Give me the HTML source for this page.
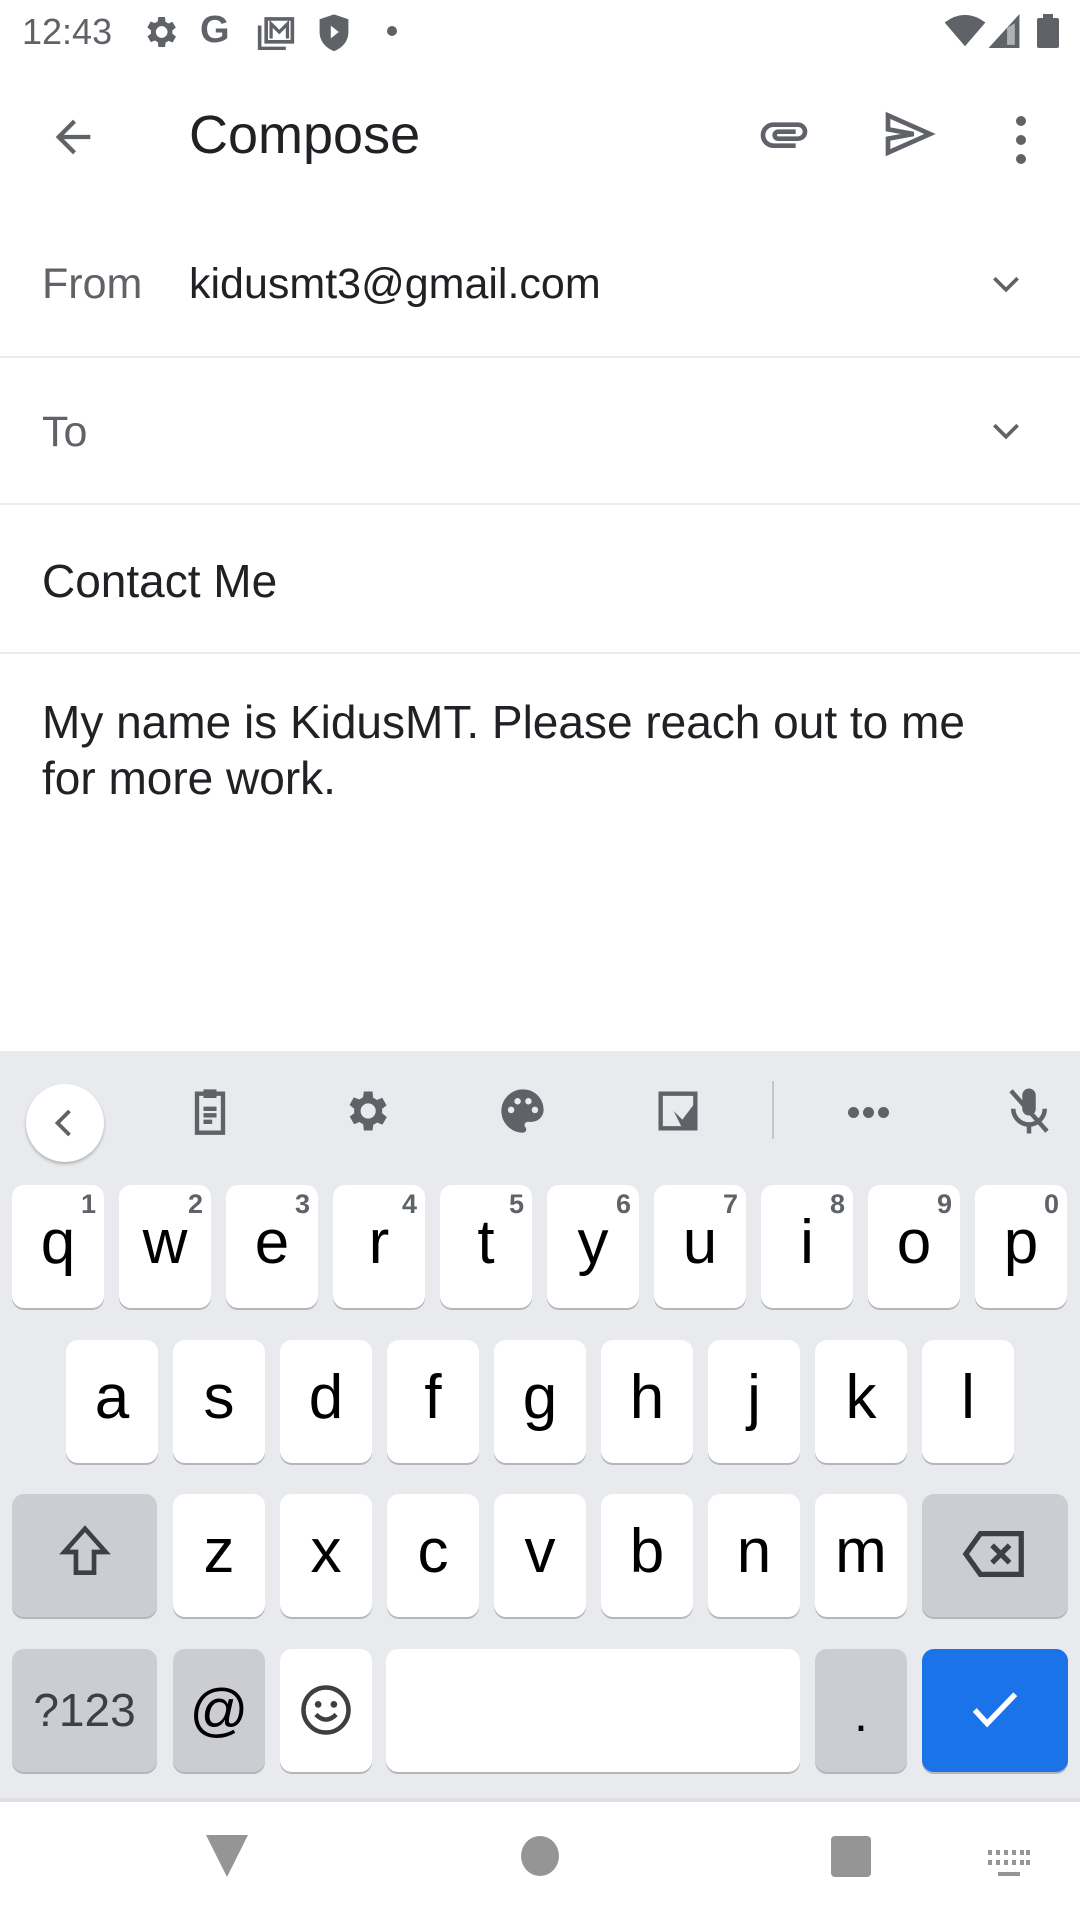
<!DOCTYPE html>
<html><head><meta charset="utf-8"><style>
*{margin:0;padding:0;box-sizing:border-box}
body{width:1080px;height:1920px;position:relative;background:#fff;font-family:"Liberation Sans",Roboto,sans-serif;overflow:hidden;color:#202124}
.a{position:absolute}
.t{font-size:43px}
.lab{color:#5f6368}
.hr{position:absolute;left:0;width:1080px;height:2px;background:#ebebeb}
.kb{position:absolute;left:0;top:1051px;width:1080px;height:747px;background:#e8eaed}
.k{position:absolute;width:92px;height:123px;background:#fff;border-radius:12px;box-shadow:0 2px 0 #b4b6ba;font-size:62px;text-align:center;line-height:116px;color:#000}
.g{background:#cbcdd3}
.n{position:absolute;right:8px;top:4px;font-size:27px;line-height:30px;color:#5f6368;font-weight:bold}
.ic{position:absolute}
</style></head><body>
<!-- status bar -->
<div class="a" style="left:22px;top:11px;font-size:36px;color:#5f6368">12:43</div>
<svg class="ic" style="left:140px;top:12px" width="40" height="40" viewBox="0 0 24 24"><path fill="#5f6368" d="M19.4 13a7.5 7.5 0 000-2l2.1-1.6-2-3.5-2.5 1a7 7 0 00-1.7-1L15 3h-4l-.4 2.7a7 7 0 00-1.7 1l-2.5-1-2 3.5L6.6 11a7.5 7.5 0 000 2l-2.1 1.6 2 3.5 2.5-1a7 7 0 001.7 1L11 21h4l.4-2.7a7 7 0 001.7-1l2.5 1 2-3.5zM13 15.5a3.5 3.5 0 110-7 3.5 3.5 0 010 7z"/></svg>
<div class="a" style="left:200px;top:9px;font-size:38px;font-weight:bold;color:#5f6368">G</div>
<svg class="ic" style="left:256px;top:14px" width="40" height="36" viewBox="0 0 24 22"><path fill="none" stroke="#5f6368" stroke-width="2.2" d="M6 3h16v14H6z M2 7v14h16"/><path fill="none" stroke="#5f6368" stroke-width="2" d="M9 15V6l5 5 5-5v9"/></svg>
<svg class="ic" style="left:318px;top:12px" width="32" height="40" viewBox="0 0 20 24"><path fill="#5f6368" d="M10 1l9 3v8c0 6-4 10-9 12C5 22 1 18 1 12V4z"/><path fill="#fff" d="M8 8l5 4-5 4z"/></svg>
<div class="a" style="left:387px;top:26px;width:10px;height:10px;border-radius:50%;background:#5f6368"></div>
<svg class="ic" style="left:944px;top:14px" width="42" height="34" viewBox="0 0 24 20"><path fill="#5f6368" d="M12 19L0 5q12-9 24 0z"/></svg>
<svg class="ic" style="left:988px;top:14px" width="32" height="34" viewBox="0 0 20 22"><path fill="#5f6368" d="M20 0v22H0z"/><path fill="#fff" d="M12 9v11h5V6z" opacity=".5"/></svg>
<div class="a" style="left:1037px;top:18px;width:22px;height:30px;background:#5f6368;border-radius:2px"></div>
<div class="a" style="left:1043px;top:14px;width:10px;height:6px;background:#5f6368"></div>
<!-- toolbar -->
<svg class="ic" style="left:47px;top:111px" width="52" height="52" viewBox="0 0 24 24"><path fill="#5f6368" d="M20 11H7.8l5.6-5.6L12 4l-8 8 8 8 1.4-1.4L7.8 13H20z"/></svg>
<div class="a" style="left:189px;top:104px;font-size:54px;color:#202124">Compose</div>
<svg class="ic" style="left:754px;top:106px" width="60" height="56" viewBox="0 0 24 24"><path fill="#5f6368" d="M2 12.5C2 9.46 4.46 7 7.5 7H18c2.21 0 4 1.79 4 4s-1.79 4-4 4H9.5C8.12 15 7 13.88 7 12.5S8.12 10 9.5 10H17v2H9.41c-.55 0-.55 1 0 1H18c1.1 0 2-.9 2-2s-.9-2-2-2H7.5C5.57 9 4 10.57 4 12.5S5.57 16 7.5 16H17v2H7.5C4.46 18 2 15.54 2 12.5z"/></svg>
<svg class="ic" style="left:878px;top:106px" width="62" height="56" viewBox="0 0 24 24"><path fill="none" stroke="#5f6368" stroke-width="2" stroke-linejoin="miter" d="M3 4l18 8-18 8V14l11-2-11-2z"/></svg>
<div class="a" style="left:1016px;top:116px;width:10px;height:10px;border-radius:50%;background:#5f6368;box-shadow:0 19px 0 #5f6368,0 38px 0 #5f6368"></div>
<!-- fields -->
<div class="a t lab" style="left:42px;top:260px">From</div>
<div class="a t" style="left:189px;top:260px">kidusmt3@gmail.com</div>
<svg class="ic" style="left:986px;top:264px" width="40" height="40" viewBox="0 0 24 24"><path fill="none" stroke="#5f6368" stroke-width="2.2" d="M5 8.5l7 7 7-7"/></svg>
<div class="hr" style="top:356px"></div>
<div class="a t lab" style="left:42px;top:408px">To</div>
<svg class="ic" style="left:986px;top:411px" width="40" height="40" viewBox="0 0 24 24"><path fill="none" stroke="#5f6368" stroke-width="2.2" d="M5 8.5l7 7 7-7"/></svg>
<div class="hr" style="top:503px"></div>
<div class="a" style="left:42px;top:554px;font-size:46px">Contact Me</div>
<div class="hr" style="top:652px"></div>
<div class="a" style="left:42px;top:694px;line-height:56px;width:1030px;font-size:46px">My name is KidusMT. Please reach out to me<br>for more work.</div>
<!-- keyboard -->
<div class="kb">
<div class="a" style="left:26px;top:33px;width:78px;height:78px;border-radius:50%;background:#fff;box-shadow:0 2px 3px rgba(0,0,0,.25)"></div>
<svg class="ic" style="left:47px;top:54px" width="36" height="36" viewBox="0 0 24 24"><path fill="none" stroke="#5f6368" stroke-width="2.5" d="M15 4l-8 8 8 8"/></svg>
<svg class="ic" style="left:184px;top:34px" width="52" height="52" viewBox="0 0 24 24"><path fill="none" stroke="#5f6368" stroke-width="2" d="M6 4h12v18H6z"/><path fill="#5f6368" d="M9 2h6v4H9zM9 10h6v2H9zM9 13h6v2H9zM9 16h4v2H9z"/></svg>
<svg class="ic" style="left:340px;top:34px" width="52" height="52" viewBox="0 0 24 24"><path fill="#5f6368" d="M19.4 13a7.5 7.5 0 000-2l2.1-1.6-2-3.5-2.5 1a7 7 0 00-1.7-1L15 3h-4l-.4 2.7a7 7 0 00-1.7 1l-2.5-1-2 3.5L6.6 11a7.5 7.5 0 000 2l-2.1 1.6 2 3.5 2.5-1a7 7 0 001.7 1L11 21h4l.4-2.7a7 7 0 001.7-1l2.5 1 2-3.5zM13 15.5a3.5 3.5 0 110-7 3.5 3.5 0 010 7z"/></svg>
<svg class="ic" style="left:497px;top:34px" width="52" height="52" viewBox="0 0 24 24"><path fill="#5f6368" d="M12 2C6.5 2 2 6.5 2 12s4.5 10 10 10c.9 0 1.5-.7 1.5-1.5 0-.4-.2-.7-.4-1-.2-.3-.4-.6-.4-1 0-.8.7-1.5 1.5-1.5H16c3 0 5.5-2.5 5.5-5.5C21.5 6 17.2 2 12 2z"/><circle cx="6.5" cy="11.5" r="1.5" fill="#e8eaed"/><circle cx="9.5" cy="7.5" r="1.5" fill="#e8eaed"/><circle cx="14.5" cy="7.5" r="1.5" fill="#e8eaed"/><circle cx="17.5" cy="11.5" r="1.5" fill="#e8eaed"/></svg>
<svg class="ic" style="left:652px;top:34px" width="52" height="52" viewBox="0 0 24 24"><path fill="none" stroke="#5f6368" stroke-width="2" d="M4 4h16v16H4z"/><path fill="#5f6368" d="M10 12l4 4 6-8v12h-6z"/></svg>
<div class="a" style="left:772px;top:30px;width:2px;height:58px;background:#c4c6ca"></div>
<div class="a" style="left:848px;top:56px;width:11px;height:11px;border-radius:50%;background:#5f6368;box-shadow:15px 0 0 #5f6368,30px 0 0 #5f6368"></div>
<svg class="ic" style="left:1002px;top:32px" width="54" height="56" viewBox="0 0 24 24"><path fill="#5f6368" d="M9 5a3 3 0 016 0v6a3 3 0 01-6 0z"/><path fill="none" stroke="#5f6368" stroke-width="2" d="M5 11a7 7 0 0014 0M12 18v4M4 3l16 18"/></svg>
</div>
<!-- row1 -->
<div class="k" style="left:12px;top:1185px">q<span class="n">1</span></div>
<div class="k" style="left:119px;top:1185px">w<span class="n">2</span></div>
<div class="k" style="left:226px;top:1185px">e<span class="n">3</span></div>
<div class="k" style="left:333px;top:1185px">r<span class="n">4</span></div>
<div class="k" style="left:440px;top:1185px">t<span class="n">5</span></div>
<div class="k" style="left:547px;top:1185px">y<span class="n">6</span></div>
<div class="k" style="left:654px;top:1185px">u<span class="n">7</span></div>
<div class="k" style="left:761px;top:1185px">i<span class="n">8</span></div>
<div class="k" style="left:868px;top:1185px">o<span class="n">9</span></div>
<div class="k" style="left:975px;top:1185px">p<span class="n">0</span></div>
<!-- row2 -->
<div class="k" style="left:66px;top:1340px">a</div>
<div class="k" style="left:173px;top:1340px">s</div>
<div class="k" style="left:280px;top:1340px">d</div>
<div class="k" style="left:387px;top:1340px">f</div>
<div class="k" style="left:494px;top:1340px">g</div>
<div class="k" style="left:601px;top:1340px">h</div>
<div class="k" style="left:708px;top:1340px">j</div>
<div class="k" style="left:815px;top:1340px">k</div>
<div class="k" style="left:922px;top:1340px">l</div>
<!-- row3 -->
<div class="k g" style="left:12px;top:1494px;width:145px"><svg style="margin-top:26px" width="62" height="64" viewBox="0 0 24 24"><path fill="none" stroke="#3c4043" stroke-width="1.8" d="M12 3l-8 9h4.5v8h7v-8H20z"/></svg></div>
<div class="k" style="left:173px;top:1494px">z</div>
<div class="k" style="left:280px;top:1494px">x</div>
<div class="k" style="left:387px;top:1494px">c</div>
<div class="k" style="left:494px;top:1494px">v</div>
<div class="k" style="left:601px;top:1494px">b</div>
<div class="k" style="left:708px;top:1494px">n</div>
<div class="k" style="left:815px;top:1494px">m</div>
<div class="k g" style="left:922px;top:1494px;width:146px"><svg style="margin-top:30px" width="70" height="60" viewBox="0 0 24 20"><path fill="none" stroke="#3c4043" stroke-width="1.8" d="M7 3h14v14H7l-5-7z"/><path fill="none" stroke="#3c4043" stroke-width="1.8" d="M11 7l6 6M17 7l-6 6"/></svg></div>
<!-- row4 -->
<div class="k g" style="left:12px;top:1649px;width:145px;font-size:46px;color:#3c4043;line-height:122px">?123</div>
<div class="k g" style="left:173px;top:1649px;font-size:58px;line-height:124px">@</div>
<div class="k" style="left:280px;top:1649px"><svg style="margin-top:34px" width="54" height="54" viewBox="0 0 24 24"><circle cx="12" cy="12" r="10" fill="none" stroke="#3c4043" stroke-width="2"/><circle cx="8.5" cy="9.5" r="1.5" fill="#3c4043"/><circle cx="15.5" cy="9.5" r="1.5" fill="#3c4043"/><path fill="none" stroke="#3c4043" stroke-width="2" d="M7.5 14q4.5 4.5 9 0"/></svg></div>
<div class="k" style="left:386px;top:1649px;width:414px"></div>
<div class="k g" style="left:815px;top:1649px;font-size:50px;line-height:130px">.</div>
<div class="k" style="left:922px;top:1649px;width:146px;background:#1a73e8"><svg style="margin-top:38px" width="54" height="46" viewBox="0 0 24 20"><path fill="none" stroke="#fff" stroke-width="2.4" d="M3 10l5.5 6L21 3"/></svg></div>
<!-- nav bar -->
<div class="a" style="left:0;top:1798px;width:1080px;height:4px;background:#dfe0e3"></div>
<svg class="ic" style="left:206px;top:1835px" width="42" height="42" viewBox="0 0 20 20"><path fill="#959595" d="M0 0h20L10 20z"/></svg>
<div class="a" style="left:521px;top:1836px;width:38px;height:40px;border-radius:50%;background:#959595"></div>
<div class="a" style="left:831px;top:1836px;width:40px;height:41px;border-radius:4px;background:#959595"></div>
<svg class="ic" style="left:988px;top:1850px" width="42" height="34" viewBox="0 0 42 34"><g fill="#959595"><rect x="0" y="0" width="4" height="5"/><rect x="8" y="0" width="4" height="5"/><rect x="16" y="0" width="4" height="5"/><rect x="24" y="0" width="4" height="5"/><rect x="32" y="0" width="4" height="5"/><rect x="38" y="0" width="4" height="5"/><rect x="0" y="10" width="4" height="5"/><rect x="8" y="10" width="4" height="5"/><rect x="16" y="10" width="4" height="5"/><rect x="24" y="10" width="4" height="5"/><rect x="32" y="10" width="4" height="5"/><rect x="38" y="10" width="4" height="5"/><rect x="10" y="22" width="22" height="4"/></g></svg>
</body></html>
